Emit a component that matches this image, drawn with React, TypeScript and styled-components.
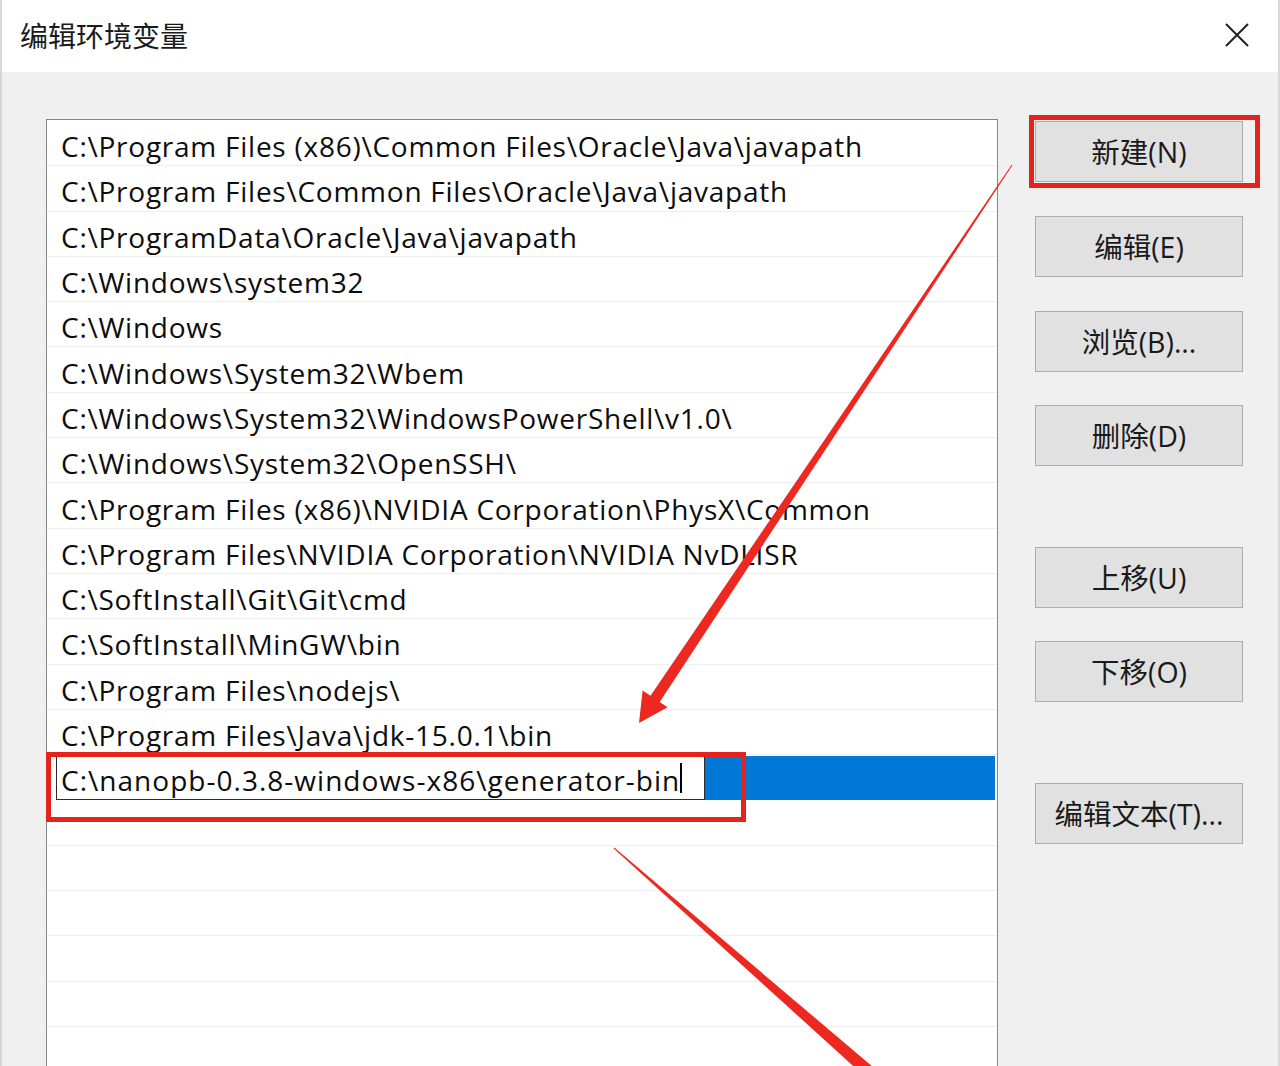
import React from "react";
import styled, { createGlobalStyle } from "styled-components";

const GlobalStyle = createGlobalStyle`
  html, body {
    margin: 0;
    padding: 0;
    background: #f0f0f0;
    overflow: hidden;
  }
  * { box-sizing: border-box; }
`;

const latin = `"Open Sans", "Noto Sans", "Noto Sans CJK SC", sans-serif`;
const cjk = `"Open Sans", "Noto Sans CJK SC", sans-serif`;

const Window = styled.div`
  position: relative;
  width: 1280px;
  height: 1066px;
  overflow: hidden;
  background: #f0f0f0;
  border-left: 2px solid #d6d6d6;
  border-right: 2px solid #d9d9d9;
  font-family: ${latin};
  color: #000;
`;

const TitleBar = styled.div`
  height: 72px;
  background: #ffffff;
  display: flex;
  align-items: center;
  justify-content: space-between;
  padding: 0 28px 0 18px;
`;

const Title = styled.div`
  font-family: ${cjk};
  font-size: 28px;
  color: #1a1a1a;
  margin-top: -2px;
`;

const CloseButton = styled.div`
  width: 26px;
  height: 26px;
  display: flex;
  align-items: center;
  justify-content: center;
  margin-top: -2px;
`;

const Body = styled.div`
  display: flex;
  align-items: flex-start;
  gap: 37px;
  padding: 47px 0 0 44px;
`;

const ListBox = styled.div`
  width: 952px;
  height: 960px;
  background: #ffffff;
  border: 1px solid #82868e;
  border-bottom: none;
  padding-top: 1px;
  overflow: hidden;
  display: flex;
  flex-direction: column;
`;

const Row = styled.div`
  flex: 0 0 45.3px;
  height: 45.3px;
  border-bottom: 1px solid #eeeeee;
  display: flex;
  align-items: center;
  padding-left: 14px;
  padding-top: 6px;
  font-size: 28px;
  letter-spacing: 0.75px;
  white-space: nowrap;
  color: #0d0d0d;
`;

const EditRow = styled.div`
  flex: 0 0 45.3px;
  height: 45.3px;
  display: flex;
  align-items: stretch;
  padding: 1px 2px 0 9px;
`;

const Editor = styled.div`
  width: 649px;
  background: #ffffff;
  border: 1px solid #2b2b2b;
  display: flex;
  align-items: center;
  padding-left: 4px;
  padding-top: 3px;
  font-size: 28px;
  letter-spacing: 1.02px;
  white-space: nowrap;
  color: #0d0d0d;
`;

const Caret = styled.span`
  display: inline-block;
  width: 1.5px;
  height: 30px;
  background: #000;
  margin-top: -4px;
`;

const SelectedFill = styled.div`
  flex: 1;
  background: #0078d7;
`;

const ButtonColumn = styled.div`
  display: flex;
  flex-direction: column;
  padding-top: 2px;
  width: 208px;
`;

const Button = styled.div<{ $gap: number }>`
  height: 61px;
  margin-top: ${(p) => p.$gap}px;
  background: #e1e1e1;
  border: 1px solid #adadad;
  display: flex;
  align-items: center;
  justify-content: center;
  padding-bottom: 2px;
  font-family: ${cjk};
  font-size: 28.5px;
  color: #1a1a1a;
`;

const Annotation = styled.div<{ $x: number; $y: number; $w: number; $h: number }>`
  position: absolute;
  left: ${(p) => p.$x}px;
  top: ${(p) => p.$y}px;
  width: ${(p) => p.$w}px;
  height: ${(p) => p.$h}px;
  border: 5px solid #e4221e;
  pointer-events: none;
`;

const ArrowLayer = styled.svg`
  position: absolute;
  left: 0;
  top: 0;
  width: 1280px;
  height: 1066px;
  pointer-events: none;
`;

const paths = [
  "C:\\Program Files (x86)\\Common Files\\Oracle\\Java\\javapath",
  "C:\\Program Files\\Common Files\\Oracle\\Java\\javapath",
  "C:\\ProgramData\\Oracle\\Java\\javapath",
  "C:\\Windows\\system32",
  "C:\\Windows",
  "C:\\Windows\\System32\\Wbem",
  "C:\\Windows\\System32\\WindowsPowerShell\\v1.0\\",
  "C:\\Windows\\System32\\OpenSSH\\",
  "C:\\Program Files (x86)\\NVIDIA Corporation\\PhysX\\Common",
  "C:\\Program Files\\NVIDIA Corporation\\NVIDIA NvDLISR",
  "C:\\SoftInstall\\Git\\Git\\cmd",
  "C:\\SoftInstall\\MinGW\\bin",
  "C:\\Program Files\\nodejs\\",
  "C:\\Program Files\\Java\\jdk-15.0.1\\bin",
];

const buttons: { label: string; gap: number }[] = [
  { label: "新建(N)", gap: 0 },
  { label: "编辑(E)", gap: 34 },
  { label: "浏览(B)...", gap: 34 },
  { label: "删除(D)", gap: 33 },
  { label: "上移(U)", gap: 81 },
  { label: "下移(O)", gap: 33 },
  { label: "编辑文本(T)...", gap: 81 },
];

function arrowPolygon(
  tail: [number, number],
  tip: [number, number],
  tailHalf: number,
  shaftHalf: number,
  headLen: number,
  headHalf: number
): string {
  const dx = tip[0] - tail[0];
  const dy = tip[1] - tail[1];
  const len = Math.hypot(dx, dy);
  const ux = dx / len;
  const uy = dy / len;
  const nx = -uy;
  const ny = ux;
  const bx = tip[0] - ux * headLen;
  const by = tip[1] - uy * headLen;
  const pts: [number, number][] = [
    [tail[0] + nx * tailHalf, tail[1] + ny * tailHalf],
    [bx + nx * shaftHalf, by + ny * shaftHalf],
    [bx + nx * headHalf, by + ny * headHalf],
    tip,
    [bx - nx * headHalf, by - ny * headHalf],
    [bx - nx * shaftHalf, by - ny * shaftHalf],
    [tail[0] - nx * tailHalf, tail[1] - ny * tailHalf],
  ];
  return pts.map((p) => `${p[0].toFixed(1)},${p[1].toFixed(1)}`).join(" ");
}

function taperPolygon(
  a: [number, number],
  b: [number, number],
  ha: number,
  hb: number
): string {
  const dx = b[0] - a[0];
  const dy = b[1] - a[1];
  const len = Math.hypot(dx, dy);
  const nx = -dy / len;
  const ny = dx / len;
  const pts = [
    [a[0] + nx * ha, a[1] + ny * ha],
    [b[0] + nx * hb, b[1] + ny * hb],
    [b[0] - nx * hb, b[1] - ny * hb],
    [a[0] - nx * ha, a[1] - ny * ha],
  ];
  return pts.map((p) => `${p[0].toFixed(1)},${p[1].toFixed(1)}`).join(" ");
}

export default function App() {
  const emptyRows = Array.from({ length: 6 });
  return (
    <>
      <GlobalStyle />
      <Window>
        <TitleBar>
          <Title>编辑环境变量</Title>
          <CloseButton>
            <svg width="24" height="24" viewBox="0 0 24 24">
              <path d="M1 1 L23 23 M23 1 L1 23" stroke="#222" strokeWidth="2" fill="none" />
            </svg>
          </CloseButton>
        </TitleBar>
        <Body>
          <ListBox>
            {paths.map((p) => (
              <Row key={p}>{p}</Row>
            ))}
            <EditRow>
              <Editor>
                C:\nanopb-0.3.8-windows-x86\generator-bin
                <Caret />
              </Editor>
              <SelectedFill />
            </EditRow>
            {emptyRows.map((_, i) => (
              <Row key={"e" + i} />
            ))}
          </ListBox>
          <ButtonColumn>
            {buttons.map((b) => (
              <Button key={b.label} $gap={b.gap}>
                {b.label}
              </Button>
            ))}
          </ButtonColumn>
        </Body>

        <Annotation $x={1027} $y={115} $w={231} $h={73} />
        <Annotation $x={44} $y={752} $w={700} $h={70} />

        <ArrowLayer viewBox="0 0 1280 1066">
          <polygon
            points={arrowPolygon([1010, 165], [637, 723], 0.5, 5.5, 29, 15)}
            fill="#ec2820"
          />
          <polygon
            points={taperPolygon([612, 848], [899, 1100], 0.5, 7)}
            fill="#ec2820"
          />
        </ArrowLayer>
      </Window>
    </>
  );
}
